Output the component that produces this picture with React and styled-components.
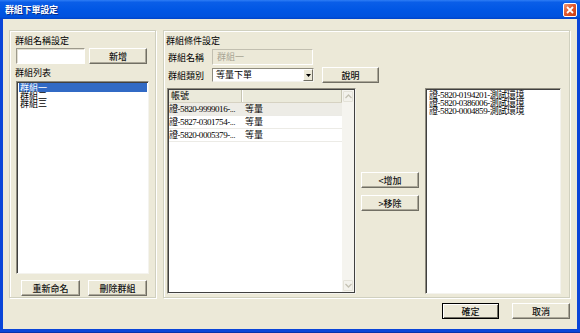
import React from "react";
import styled, { createGlobalStyle } from "styled-components";

const GlobalStyle = createGlobalStyle`
  html, body {
    margin: 0;
    padding: 0;
    background: #ece9d8;
  }
  body {
    font-family: "Noto Sans CJK TC", sans-serif;
    font-size: 9px;
    color: #000;
  }
`;

const groups = ["群組一", "群組二", "群組三"];

const accounts = [
  { id: "證-5820-9999016-...", type: "等量", muted: true },
  { id: "證-5827-0301754-...", type: "等量" },
  { id: "證-5820-0005379-...", type: "等量" },
];

const picked = [
  "證-5820-0194201-測試環境",
  "證-5820-0386006-測試環境",
  "證-5820-0004859-測試環境",
];

function App() {
  return (
    <>
      <GlobalStyle />
      <Window>
        <TitleBar>
          <Title>群組下單設定</Title>
          <CloseButton>
            <svg width="8" height="8" viewBox="0 0 8 8">
              <path d="M1 1L7 7M7 1L1 7" stroke="#fff" strokeWidth="1.8" />
            </svg>
          </CloseButton>
        </TitleBar>

        <Body>
          <Panels>
            <GroupBox $width={147}>
              <Label>群組名稱設定</Label>
              <InputRow>
                <TextInput $width={69} />
                <Button $width={58}>新增</Button>
              </InputRow>
              <Label $top={3}>群組列表</Label>
              <ListBox $height={193} $top={3}>
                {groups.map((g, i) => (
                  <ListItem key={g} $selected={i === 0}>
                    {g}
                  </ListItem>
                ))}
              </ListBox>
              <ButtonRow>
                <Button $width={59}>重新命名</Button>
                <Button $width={59}>刪除群組</Button>
              </ButtonRow>
            </GroupBox>

            <GroupBox $grow>
              <Label>群組條件設定</Label>
              <FieldRow $top={3}>
                <FieldLabel>群組名稱</FieldLabel>
                <TextInput $width={101} $disabled>
                  群組一
                </TextInput>
              </FieldRow>
              <FieldRow $top={2}>
                <FieldLabel>群組類別</FieldLabel>
                <Select>
                  <span>等量下單</span>
                  <DropArrow>
                    <svg width="5" height="3" viewBox="0 0 5 3">
                      <path d="M0 0H5L2.5 3Z" fill="#000" />
                    </svg>
                  </DropArrow>
                </Select>
                <Button $width={57} $left={8}>
                  說明
                </Button>
              </FieldRow>

              <Main>
                <Table>
                  <TableBody>
                    <HeaderRow>
                      <HeadCell $width={73}>帳號</HeadCell>
                      <HeadCell $grow />
                    </HeaderRow>
                    {accounts.map((a) => (
                      <Row key={a.id} $muted={a.muted}>
                        <Cell $width={73} $mono>
                          {a.id}
                        </Cell>
                        <Cell $grow>{a.type}</Cell>
                      </Row>
                    ))}
                  </TableBody>
                  <ScrollBar>
                    <ScrollArrow>
                      <svg width="7" height="5" viewBox="0 0 7 5">
                        <path d="M0.5 4L3.5 1L6.5 4" stroke="#c4c1b3" strokeWidth="1.3" fill="none" />
                      </svg>
                    </ScrollArrow>
                    <ScrollArrow>
                      <svg width="7" height="5" viewBox="0 0 7 5">
                        <path d="M0.5 1L3.5 4L6.5 1" stroke="#c4c1b3" strokeWidth="1.3" fill="none" />
                      </svg>
                    </ScrollArrow>
                  </ScrollBar>
                </Table>

                <MoveButtons>
                  <Button $width={58}>&lt;增加</Button>
                  <Button $width={58}>&gt;移除</Button>
                </MoveButtons>

                <ListBox $grow $pad={2}>
                  {picked.map((p) => (
                    <ListItem key={p} $mono>
                      {p}
                    </ListItem>
                  ))}
                </ListBox>
              </Main>
            </GroupBox>
          </Panels>

          <Footer>
            <Button $width={57} $default>
              確定
            </Button>
            <Button $width={58}>取消</Button>
          </Footer>
        </Body>
      </Window>
    </>
  );
}

const Window = styled.div`
  width: 580px;
  height: 333px;
  display: flex;
  flex-direction: column;
  background: #0a45d8;
  padding: 0 3px 4px 3px;
  box-sizing: border-box;
  box-shadow: inset 0 -1px 0 #0831a8;
`;

const TitleBar = styled.div`
  height: 19px;
  margin: 0 -3px;
  padding: 0 3px 0 5px;
  display: flex;
  align-items: center;
  justify-content: space-between;
  background: linear-gradient(
    to bottom,
    #2e7df5 0%,
    #0a5ee8 12%,
    #0056e4 55%,
    #0052de 88%,
    #0043c9 100%
  );
`;

const Title = styled.span`
  color: #fff;
  font-weight: 700;
  font-size: 9px;
  letter-spacing: -0.2px;
  text-shadow: 1px 1px 0 #0a2e8a;
`;

const CloseButton = styled.div`
  width: 14px;
  height: 14px;
  box-sizing: border-box;
  border: 1px solid #fff;
  border-radius: 2px;
  background: linear-gradient(135deg, #f09a78 0%, #e2592d 45%, #c93d12 100%);
  display: flex;
  align-items: center;
  justify-content: center;
  margin-top: 1px;
`;

const Body = styled.div`
  flex: 1;
  background: #ece9d8;
  padding: 11px 7px 0 6px;
  display: flex;
  flex-direction: column;
`;

const Panels = styled.div`
  display: flex;
  gap: 7px;
  height: 268px;
`;

const GroupBox = styled.div`
  box-sizing: border-box;
  ${(p) => (p.$grow ? "flex: 1;" : `width: ${p.$width}px;`)}
  height: 100%;
  border: 1px solid #d0d0bf;
  box-shadow: inset 1px 1px 0 #fff, 1px 1px 0 #fff;
  padding: 4px 4px 0 ${(p) => (p.$grow ? 3 : 6)}px;
  display: flex;
  flex-direction: column;
`;

const Label = styled.div`
  line-height: 11px;
  height: 11px;
  margin-top: ${(p) => p.$top || 0}px;
  padding-left: 1px;
  margin-left: -2px;
  white-space: nowrap;
`;

const InputRow = styled.div`
  display: flex;
  gap: 4px;
  margin-top: 2px;
`;

const TextInput = styled.div`
  width: ${(p) => p.$width}px;
  height: 16px;
  box-sizing: border-box;
  background: ${(p) => (p.$disabled ? "#ece9d8" : "#fff")};
  color: #a7a493;
  border: 1px solid;
  border-color: ${(p) =>
    p.$disabled ? "#c2bfb0 #fff #fff #c2bfb0" : "#9d9a8c #fff #fff #9d9a8c"};
  box-shadow: ${(p) => (p.$disabled ? "none" : "inset 1px 1px 0 #e2dfd3")};
  padding-left: 4px;
  line-height: 14px;
  white-space: nowrap;
`;

const Button = styled.div`
  width: ${(p) => p.$width}px;
  height: 16px;
  margin-left: ${(p) => p.$left || 0}px;
  box-sizing: border-box;
  background: #ece9d8;
  border: 1px solid;
  border-color: ${(p) =>
    p.$default ? "#000" : "#fff #716f64 #716f64 #fff"};
  box-shadow: ${(p) =>
    p.$default
      ? "inset 1px 1px 0 #fff, inset -1px -1px 0 #716f64"
      : "inset -1px -1px 0 #aca899"};
  display: flex;
  align-items: center;
  justify-content: center;
  font-size: 9px;
  font-weight: 500;
  color: #111;
  white-space: nowrap;
`;

const ListBox = styled.div`
  box-sizing: border-box;
  ${(p) => (p.$grow ? "flex: 1;" : `height: ${p.$height}px;`)}
  margin-top: ${(p) => p.$top || 0}px;
  margin-right: ${(p) => (p.$grow ? 0 : 2)}px;
  background: #fff;
  border: 1px solid;
  border-color: #8f8c7f #f4f3ee #f4f3ee #8f8c7f;
  box-shadow: inset 1px 1px 0 #404040;
  padding: ${(p) => p.$pad || 1}px 1px 0 2px;
`;

const ListItem = styled.div`
  line-height: 8px;
  height: 8px;
  padding-left: 1px;
  white-space: nowrap;
  overflow: visible;
  font-family: ${(p) =>
    p.$mono ? '"Liberation Serif", "Noto Sans CJK TC", serif' : "inherit"};
  letter-spacing: ${(p) => (p.$mono ? "-0.45px" : "0")};
  background: ${(p) => (p.$selected ? "#316ac5" : "transparent")};
  color: ${(p) => (p.$selected ? "#fff" : "#000")};
  ${(p) => p.$selected && "height: 9px; line-height: 9px;"}
`;

const ButtonRow = styled.div`
  display: flex;
  gap: 8px;
  margin-top: 6px;
  padding-left: 5px;
`;

const FieldRow = styled.div`
  display: flex;
  align-items: center;
  margin-top: ${(p) => p.$top || 0}px;
`;

const FieldLabel = styled.div`
  width: 45px;
  padding-left: 1px;
  box-sizing: border-box;
  white-space: nowrap;
`;

const Select = styled.div`
  width: 102px;
  height: 14px;
  box-sizing: border-box;
  background: #fff;
  border: 1px solid;
  border-color: #8f8c7f #f4f3ee #f4f3ee #8f8c7f;
  display: flex;
  align-items: center;
  justify-content: space-between;
  padding-left: 3px;
  line-height: 12px;
`;

const DropArrow = styled.div`
  width: 10px;
  height: 12px;
  box-sizing: border-box;
  background: #ece9d8;
  border: 1px solid;
  border-color: #fff #716f64 #716f64 #fff;
  display: flex;
  align-items: center;
  justify-content: center;
`;

const Main = styled.div`
  flex: 1;
  display: flex;
  gap: 5px;
  margin: 5px 4px 3px 0;
`;

const Table = styled.div`
  width: 189px;
  box-sizing: border-box;
  display: flex;
  background: #fff;
  border: 1px solid;
  border-color: #8f8c7f #f4f3ee #f4f3ee #8f8c7f;
  box-shadow: inset 1px 1px 0 #404040, inset -1px -1px 0 #404040;
  padding: 1px;
`;

const TableBody = styled.div`
  flex: 1;
  display: flex;
  flex-direction: column;
`;

const HeaderRow = styled.div`
  display: flex;
  height: 12px;
  background: #ebeadb;
  border-bottom: 1px solid #d6d2c2;
`;

const HeadCell = styled.div`
  ${(p) => (p.$grow ? "flex: 1;" : `width: ${p.$width}px;`)}
  box-sizing: border-box;
  border-right: 1px solid #c7c5b2;
  box-shadow: 1px 0 0 #fff;
  line-height: 12px;
  padding-left: 2px;
`;

const Row = styled.div`
  display: flex;
  height: 12px;
  background: ${(p) => (p.$muted ? "#edece6" : "#fff")};
  border-bottom: 1px solid #ecebe6;
`;

const Cell = styled.div`
  ${(p) => (p.$grow ? "flex: 1;" : `width: ${p.$width}px;`)}
  box-sizing: border-box;
  line-height: 12px;
  padding-left: ${(p) => (p.$mono ? 0 : 3)}px;
  white-space: nowrap;
  overflow: hidden;
  font-family: ${(p) =>
    p.$mono ? '"Liberation Serif", "Noto Sans CJK TC", serif' : "inherit"};
  letter-spacing: ${(p) => (p.$mono ? "-0.45px" : "0")};
`;

const ScrollBar = styled.div`
  width: 11px;
  background: #f5f4ef;
  display: flex;
  flex-direction: column;
  justify-content: space-between;
  padding: 1px 0 1px 1px;
`;

const ScrollArrow = styled.div`
  width: 10px;
  height: 11px;
  box-sizing: border-box;
  background: #f3f2ec;
  border: 1px solid #e4e2d8;
  border-radius: 1px;
  display: flex;
  align-items: center;
  justify-content: center;
`;

const MoveButtons = styled.div`
  width: 58px;
  margin-right: 1px;
  display: flex;
  flex-direction: column;
  justify-content: center;
  gap: 7px;
  padding-top: 1px;
`;

const Footer = styled.div`
  display: flex;
  justify-content: flex-end;
  gap: 13px;
  margin-top: 5px;
`;

export default App;
